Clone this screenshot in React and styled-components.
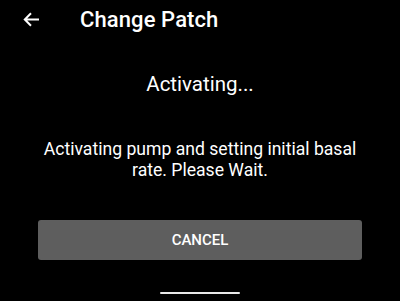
import React from "react";
import styled, { createGlobalStyle } from "styled-components";

const Global = createGlobalStyle`
  html, body { margin: 0; padding: 0; background: #000; }
  body { font-family: Roboto, "Noto Sans", sans-serif; color: #fff; }
`;

const Screen = styled.div`
  width: 400px;
  height: 301px;
  background: #000;
  display: flex;
  flex-direction: column;
  overflow: hidden;
`;

const Toolbar = styled.div`
  height: 38px;
  display: flex;
  align-items: center;
  padding-left: 22px;
  gap: 40px;
`;

const BackButton = styled.div`
  width: 18px;
  height: 18px;
  display: flex;
  align-items: center;
  justify-content: center;
`;

const Title = styled.h1`
  margin: 0;
  font-size: 22px;
  font-weight: 500;
  color: #fff;
  letter-spacing: 0.1px;
`;

const Status = styled.div`
  margin-top: 34px;
  text-align: center;
  font-size: 20.5px;
  font-weight: 400;
  color: #fff;
`;

const Message = styled.p`
  margin: 42.5px 0 0;
  padding: 0 40px;
  text-align: center;
  font-size: 17.6px;
  line-height: 21px;
  color: #fff;
`;

const ButtonRow = styled.div`
  margin-top: 39.5px;
  padding: 0 38px;
`;

const Button = styled.button`
  width: 100%;
  height: 40px;
  background: #5e5e5e;
  border: none;
  border-radius: 3px;
  color: #fff;
  font-family: Roboto, sans-serif;
  font-size: 15px;
  font-weight: 500;
  letter-spacing: 0;
`;

const HomeBar = styled.div`
  margin: auto auto 7px;
  width: 80px;
  height: 2px;
  border-radius: 1px;
  background: #e8e8e8;
`;

export default function App() {
  return (
    <>
      <Global />
      <Screen>
        <Toolbar>
          <BackButton>
            <svg width="17" height="15" viewBox="0 0 17 15" fill="none">
              <path d="M16 7.5H2M8 1.3L1.8 7.5L8 13.7" stroke="#fff" strokeWidth="2" />
            </svg>
          </BackButton>
          <Title>Change Patch</Title>
        </Toolbar>
        <Status>Activating...</Status>
        <Message>Activating pump and setting initial basal rate. Please Wait.</Message>
        <ButtonRow>
          <Button>CANCEL</Button>
        </ButtonRow>
        <HomeBar />
      </Screen>
    </>
  );
}
